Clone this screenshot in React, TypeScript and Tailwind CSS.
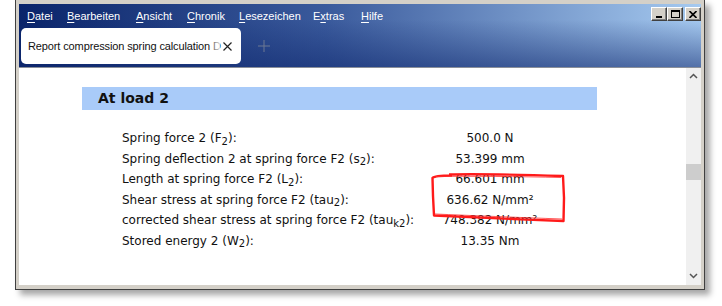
import React from "react";

const menu: { label: string; key: number; w: string }[] = [
  { label: "Datei", key: 0, w: "w-[40px]" },
  { label: "Bearbeiten", key: 0, w: "w-[69px]" },
  { label: "Ansicht", key: 0, w: "w-[51px]" },
  { label: "Chronik", key: 0, w: "w-[52px]" },
  { label: "Lesezeichen", key: 0, w: "w-[74px]" },
  { label: "Extras", key: 1, w: "w-[48px]" },
  { label: "Hilfe", key: 0, w: "w-[40px]" },
];

function MenuItem({ label, k, w }: { label: string; k: number; w: string }) {
  return (
    <span className={`${w} whitespace-nowrap`}>
      {label.slice(0, k)}
      <span className="underline underline-offset-2">{label[k]}</span>
      {label.slice(k + 1)}
    </span>
  );
}

function WinButton({ children }: { children: React.ReactNode }) {
  return (
    <div className="w-[16px] h-[14px] bg-[#d4d0c8] border border-t-white border-l-white border-r-[#404040] border-b-[#404040] shadow-[inset_-1px_-1px_0_#808080] flex items-center justify-center">
      {children}
    </div>
  );
}

const rows: { label: React.ReactNode; value: string }[] = [
  { label: <>Spring force 2 (F<sub className="text-[10px]">2</sub>):</>, value: "500.0 N" },
  { label: <>Spring deflection 2 at spring force F2 (s<sub className="text-[10px]">2</sub>):</>, value: "53.399 mm" },
  { label: <>Length at spring force F2 (L<sub className="text-[10px]">2</sub>):</>, value: "66.601 mm" },
  { label: <>Shear stress at spring force F2 (tau<sub className="text-[10px]">2</sub>):</>, value: "636.62 N/mm²" },
  { label: <>corrected shear stress at spring force F2 (tau<sub className="text-[10px]">k2</sub>):</>, value: "748.382 N/mm²" },
  { label: <>Stored energy 2 (W<sub className="text-[10px]">2</sub>):</>, value: "13.35 Nm" },
];

export default function App() {
  return (
    <div className="relative w-[722px] h-[306px] bg-white overflow-hidden">
      <div className="ml-[15px] w-[690px] h-[290px] border-x border-b border-[#404040] bg-[#d4d0c8] pt-[4px] px-[3px] pb-[4px] shadow-[5px_5px_6px_rgba(0,0,0,0.35)] flex flex-col">
        {/* Header */}
        <div className="relative h-[64px] shrink-0 bg-[linear-gradient(to_right,#0a246a_0%,#3a5a9c_45%,#a6caf0_100%)] border-b border-[#8a8f99]">
          <div className="absolute inset-0 bg-[linear-gradient(to_bottom,rgba(255,255,255,0)_0%,rgba(255,255,255,0)_25%,rgba(15,40,110,0.55)_100%)]" />
          <div className="relative flex flex-col">
            <div className="h-[24px] flex items-center pl-[8px] text-white text-[11px] font-['Liberation_Sans',Arial,sans-serif]">
              {menu.map((m) => (
                <MenuItem key={m.label} label={m.label} k={m.key} w={m.w} />
              ))}
            </div>
            <div className="h-[36px] flex items-center">
              <div className="ml-[2px] w-[220px] h-[36px] bg-white rounded-[5px] flex items-center pl-[7px]">
                <div className="relative w-[192px] whitespace-nowrap text-[11px] tracking-[-0.12px] text-[#111] font-['Liberation_Sans',Arial,sans-serif]">
                  Report compression spring calculation D
                  <div className="absolute right-0 top-0 h-full w-[9px] bg-[linear-gradient(to_right,rgba(255,255,255,0.2),rgba(255,255,255,0.85))]" />
                </div>
                <svg width="9" height="9" viewBox="0 0 9 9" className="ml-[3px]">
                  <path d="M0.5 0.5 L8.5 8.5 M8.5 0.5 L0.5 8.5" stroke="#222" strokeWidth="1.2" />
                </svg>
              </div>
              <svg width="12" height="12" viewBox="0 0 12 12" className="ml-[17px]">
                <path d="M6 0 V12 M0 6 H12" stroke="#6d7892" strokeWidth="1" />
              </svg>
            </div>
          </div>
          <div className="absolute right-0 top-[3px] flex">
            <WinButton>
              <div className="w-[6px] h-[2px] bg-black mt-[6px] -ml-[1px]" />
            </WinButton>
            <WinButton>
              <div className="w-[9px] h-[8px] border border-black border-t-2" />
            </WinButton>
            <div className="w-[2px]" />
            <WinButton>
              <svg width="8" height="7" viewBox="0 0 8 7">
                <path d="M0.5 0 L7.5 7 M7.5 0 L0.5 7" stroke="#000" strokeWidth="1.6" />
              </svg>
            </WinButton>
          </div>
        </div>

        {/* Content */}
        <div className="flex-1 flex bg-white min-h-0">
          <div className="flex-1 pt-[19px] font-['DejaVu_Sans',Verdana,sans-serif] text-[#111]">
            <div className="ml-[63px] w-[515px] h-[23px] bg-[#a9cbf9] flex items-center pl-[16px] text-[14px] font-bold">
              At load 2
            </div>
            <div className="mt-[18px] pl-[103px] text-[12px]">
              {rows.map((r, i) => (
                <div key={i} className="grid grid-cols-[310px_116px] h-[20.5px] items-center leading-[20px]">
                  <div className="whitespace-nowrap">{r.label}</div>
                  <div className="text-center whitespace-nowrap">{r.value}</div>
                </div>
              ))}
            </div>
          </div>
          <div className="w-[15px] bg-[#f0f0f0] relative">
            <svg width="9" height="6" viewBox="0 0 9 6" className="absolute left-[3px] top-[5px]">
              <path d="M1 5 L4.5 1.5 L8 5" stroke="#555" strokeWidth="1.5" fill="none" />
            </svg>
            <div className="absolute left-0 top-[96px] w-[15px] h-[16px] bg-[#cdcdcd]" />
            <svg width="9" height="6" viewBox="0 0 9 6" className="absolute left-[3px] bottom-[6px]">
              <path d="M1 1 L4.5 4.5 L8 1" stroke="#555" strokeWidth="1.5" fill="none" />
            </svg>
          </div>
        </div>
      </div>

      {/* red hand-drawn annotation */}
      <svg className="absolute left-0 top-0 pointer-events-none" width="722" height="306" viewBox="0 0 722 306">
        <path
          d="M449 174.5 C480 173.5 530 175 563 176 L564 198 L563.5 221 C520 219.5 470 217 434 215.5 L433 196 L432.5 178 C434 176 440 175.5 452 175.5"
          stroke="#ff1a1a"
          strokeWidth="2.4"
          fill="none"
          strokeLinejoin="round"
        />
        <path
          d="M436 176.5 C470 176 520 176.5 561 177.5 M562 219 C520 217.5 470 215.5 435 214"
          stroke="#ff3030"
          strokeWidth="1"
          fill="none"
          opacity="0.8"
        />
      </svg>
    </div>
  );
}
